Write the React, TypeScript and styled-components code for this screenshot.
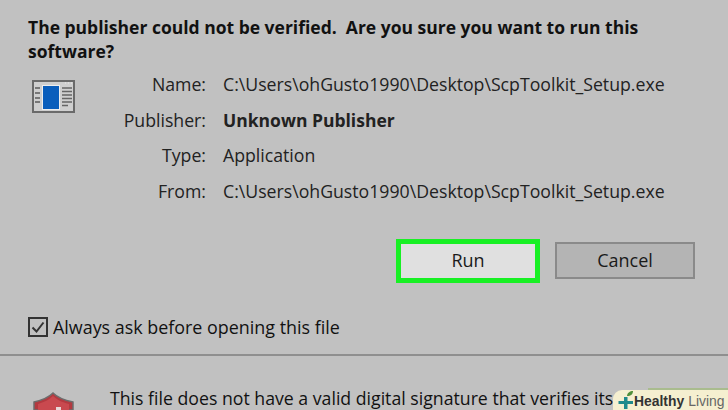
import React from "react";
import styled, { createGlobalStyle } from "styled-components";

const Global = createGlobalStyle`
  html, body { margin: 0; padding: 0; background: #c1c1c1; }
  #root { width: 728px; height: 410px; overflow: hidden; }
`;
const Page = styled.div`
  position: relative;
  width: 728px;
  height: 410px;
  overflow: hidden;
  background: #c1c1c1;
  color: #111;
  font-family: "Open Sans", "Noto Sans", sans-serif;
  font-size: 18px;
`;
const Heading = styled.div`
  margin: 15px 0 0 28px;
  width: 640px;
  font-weight: 700;
  font-size: 17.5px;
  line-height: 24px;
`;
const InfoRow = styled.div`
  display: flex;
  margin-top: 3px;
`;
const IconSlot = styled.div`
  width: 75px;
  padding: 14px 0 0 32px;
  box-sizing: border-box;
`;
const Fields = styled.div`
  display: grid;
  grid-template-columns: 131px auto;
  column-gap: 17px;
  grid-auto-rows: 35.7px;
  align-items: center;
`;
const Label = styled.div`
  text-align: right;
  color: #222;
  font-size: 17.7px;
`;
const Value = styled.div<{ $bold?: boolean }>`
  font-weight: ${(p) => (p.$bold ? 700 : 400)};
  font-size: ${(p) => (p.$bold ? "17.5px" : "17.7px")};
  color: #222;
  white-space: nowrap;
`;
const Buttons = styled.div`
  display: flex;
  justify-content: flex-end;
  align-items: center;
  gap: 15px;
  margin: 30px 33px 0 0;
`;
const Button = styled.div<{ $primary?: boolean }>`
  box-sizing: border-box;
  width: ${(p) => (p.$primary ? "144px" : "140px")};
  height: ${(p) => (p.$primary ? "44px" : "37px")};
  padding-bottom: 1px;
  display: flex;
  align-items: center;
  justify-content: center;
  font-size: 18px;
  color: #1a1a1a;
  background: ${(p) => (p.$primary ? "#e0e0e0" : "#b4b4b4")};
  border: ${(p) => (p.$primary ? "5px solid #18f024" : "2px solid #8a8a8a")};
`;
const CheckRow = styled.div`
  display: flex;
  align-items: center;
  gap: 5px;
  margin: 32px 0 0 28px;
  font-size: 17.9px;
`;
const CheckBox = styled.div`
  box-sizing: border-box;
  width: 20px;
  height: 20px;
  border: 2px solid #333;
  display: flex;
  align-items: center;
  justify-content: center;
`;
const Divider = styled.div`
  height: 2px;
  background: #8f8f8f;
  margin-top: 15px;
`;
const Warning = styled.div`
  display: flex;
  margin-top: 33px;
`;
const ShieldSlot = styled.div`
  width: 110px;
  padding: 3px 0 0 32px;
  box-sizing: border-box;
  flex: none;
`;
const WarnText = styled.div`
  white-space: nowrap;
  font-size: 17.7px;
  line-height: 24px;
  margin-top: -3px;
`;
const Badge = styled.div`
  position: absolute;
  right: 0;
  bottom: 0;
  width: 115px;
  height: 20px;
  background: #f5efd0;
  border-top-left-radius: 9px;
  box-sizing: border-box;
  display: flex;
  align-items: center;
  padding-left: 2px;
  font-family: "Liberation Sans", sans-serif;
  font-size: 13.9px;
  white-space: nowrap;
  &::before {
    content: "";
    position: absolute;
    top: -2px;
    left: 35px;
    right: 0;
    height: 2px;
    background: #a9bc8e;
  }
`;
const BadgeStrong = styled.span`
  font-weight: 700;
  color: #333;
  margin-left: -2px;
  padding-top: 2px;
`;
const BadgeLight = styled.span`
  color: #666;
  margin-left: 4px;
  padding-top: 2px;
`;

const path = "C:\\Users\\ohGusto1990\\Desktop\\ScpToolkit_Setup.exe";

export default function App() {
  return (
    <Page>
      <Global />
      <Heading>The publisher could not be verified.&nbsp; Are you sure you want to run this software?</Heading>
      <InfoRow>
        <IconSlot>
          <svg width="43" height="33" viewBox="0 0 43 33" style={{ display: "block" }}>
            <rect x="1" y="1" width="41" height="31" fill="#cfcfcf" stroke="#6a6a6a" strokeWidth="2" />
            <path d="M33 3h1M36 3h1M39 3h1" stroke="#ddd" strokeWidth="2" />
            <rect x="10.500" y="5.500" width="17" height="24" fill="#0a5ebc" stroke="#eee" />
            <path d="M3 8h5M3 13h5M3 18h5M3 22h5" stroke="#777" strokeWidth="2" />
            <path d="M30 8h10M30 11.500h10M30 15h10M30 18.500h10M30 22h10M30 25.500h6" stroke="#666" strokeWidth="1.400" />
          </svg>
        </IconSlot>
        <Fields>
          <Label>Name:</Label>
          <Value>{path}</Value>
          <Label>Publisher:</Label>
          <Value $bold>Unknown Publisher</Value>
          <Label>Type:</Label>
          <Value>Application</Value>
          <Label>From:</Label>
          <Value>{path}</Value>
        </Fields>
      </InfoRow>
      <Buttons>
        <Button $primary>Run</Button>
        <Button>Cancel</Button>
      </Buttons>
      <CheckRow>
        <CheckBox>
          <svg width="16" height="16" viewBox="0 0 16 16">
            <path d="M2.5 8.500l4 4 7-9" fill="none" stroke="#333" strokeWidth="2" />
          </svg>
        </CheckBox>
        Always ask before opening this file
      </CheckRow>
      <Divider />
      <Warning>
        <ShieldSlot>
          <svg width="44" height="18" viewBox="0 0 44 18" style={{ display: "block" }}>
            <path d="M21 1c4 4 10 7 20 9v8H2v-8c9-2 15-5 19-9z" fill="#b33a40" stroke="#6d6d6d" strokeWidth="1.500" />
            <path d="M21 4c3 3 8 6 16 8v6H6v-6c7-2 12-5 15-8z" fill="#c9494f" />
            <path d="M24 15h5v3h-5z" fill="#e8d8d8" />
          </svg>
        </ShieldSlot>
        <WarnText>This file does not have a valid digital signature that verifies its</WarnText>
      </Warning>
      <Badge>
        <svg width="21" height="20" viewBox="0 0 21 20" style={{ flex: "none" }}>
          <path d="M9 7h3.500v4H18v3h-5.500v5H9v-5H3.500v-3H9z" fill="#1f8a8c" />
          <path d="M12 6c0-3 3-5 6-5 0 3-2 5-6 5z" fill="#4f8f3a" />
        </svg>
        <BadgeStrong>Healthy</BadgeStrong>
        <BadgeLight>Living</BadgeLight>
      </Badge>
    </Page>
  );
}
